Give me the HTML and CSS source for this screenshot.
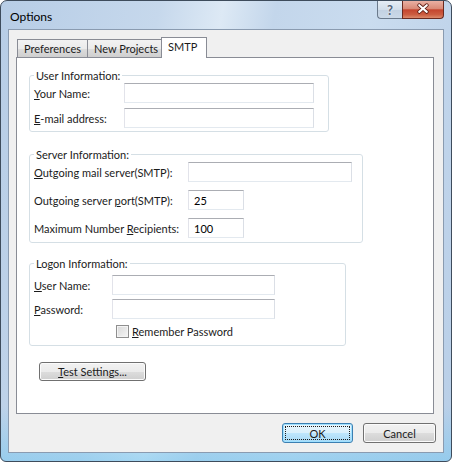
FILE: index.html
```html
<!DOCTYPE html>
<html lang="en">
<head>
    <meta charset="UTF-8">
    <title>Options</title>
    <link rel="stylesheet" href="styles.css">
</head>
<body>
    <div class="window">
        <div class="titlebar">
            <span class="title">Options</span>
            <div class="caption-buttons">
                <span class="cap-btn help">?</span>
                <span class="cap-btn close">
                    <svg width="42" height="18" viewBox="0 0 42 18">
                        <path d="M17 5 L25 12 M25 5 L17 12" stroke="#5a1a12" stroke-width="4" stroke-linecap="round"/>
                        <path d="M17 5 L25 12 M25 5 L17 12" stroke="#ffffff" stroke-width="2.2" stroke-linecap="round"/>
                    </svg>
                </span>
            </div>
        </div>

        <div class="client">
            <div class="tabs">
                <span class="tab tab-pref">Preferences</span>
                <span class="tab tab-proj">New Projects</span>
                <span class="tab tab-smtp active">SMTP</span>
            </div>

            <div class="panel">
                <fieldset class="group group-user">
                    <legend>User Information:</legend>
                    <div class="row">
                        <label class="lbl"><u>Y</u>our Name:</label>
                        <input type="text" class="text-box w-name">
                    </div>
                    <div class="row">
                        <label class="lbl"><u>E</u>-mail address:</label>
                        <input type="text" class="text-box w-name">
                    </div>
                </fieldset>

                <fieldset class="group group-server">
                    <legend>Server Information:</legend>
                    <div class="row">
                        <label class="lbl"><u>O</u>utgoing mail server(SMTP):</label>
                        <input type="text" class="text-box w-server">
                    </div>
                    <div class="row">
                        <label class="lbl">Outgoing server <u>p</u>ort(SMTP):</label>
                        <input type="text" class="text-box w-small" value="25">
                    </div>
                    <div class="row">
                        <label class="lbl">Maximum Number <u>R</u>ecipients:</label>
                        <input type="text" class="text-box w-small" value="100">
                    </div>
                </fieldset>

                <fieldset class="group group-logon">
                    <legend>Logon Information:</legend>
                    <div class="row">
                        <label class="lbl"><u>U</u>ser Name:</label>
                        <input type="text" class="text-box w-logon">
                    </div>
                    <div class="row">
                        <label class="lbl"><u>P</u>assword:</label>
                        <input type="password" class="text-box w-logon">
                    </div>
                    <div class="check-row">
                        <span class="checkbox"></span>
                        <span><u>R</u>emember Password</span>
                    </div>
                </fieldset>

                <button class="btn btn-test"><u>T</u>est Settings...</button>
            </div>

            <div class="dialog-buttons">
                <button class="btn btn-ok"><span class="focus-rect">OK</span></button>
                <button class="btn btn-cancel">Cancel</button>
            </div>
        </div>
    </div>
</body>
</html>
```

FILE: styles.css
```css
body {
    margin: 0;
    font-family: Lato, "Liberation Sans", sans-serif;
    font-size: 11px;
    color: #1b1b1b;
    white-space: nowrap;
}
.window {
    width: 452px;
    height: 462px;
    box-sizing: border-box;
    border: 1px solid #3e4c5c;
    border-radius: 7px 7px 6px 6px;
    background:
        linear-gradient(to bottom, rgba(255, 255, 255, 0) 88%, rgba(120, 200, 240, 0.55) 100%),
        linear-gradient(100deg, #b7cde6 0%, #c6d8ec 30%, #dde9f5 42%, #c3d6eb 52%, #cadcef 70%, #b8cee7 100%);
    display: flex;
    flex-direction: column;
    overflow: hidden;
}
.titlebar {
    height: 28px;
    display: flex;
    align-items: flex-start;
}
.title {
    margin: 8px 0 0 9px;
    font-size: 12px;
    color: #000000;
}
.caption-buttons {
    margin-left: auto;
    margin-right: 7px;
    display: flex;
}
.cap-btn {
    height: 18px;
    box-sizing: border-box;
    display: flex;
    align-items: center;
    justify-content: center;
}
.help {
    width: 25px;
    border: 1px solid #6b7a8c;
    border-top: none;
    border-right: none;
    border-radius: 0 0 0 4px;
    background: linear-gradient(#e6edf5, #d2deea 50%, #c2d1e2 51%, #cbd9e8);
    color: #56657a;
    font-weight: bold;
    font-size: 13px;
    text-shadow: 0 0 2px #ffffff;
}
.close {
    width: 42px;
    border: 1px solid #6a2a20;
    border-top: none;
    border-radius: 0 0 4px 0;
    background: linear-gradient(#eab0a3, #d98a77 45%, #c4452f 52%, #cc5d41 80%, #dc8a6c);
}
.close svg {
    display: block;
    margin-top: -1px;
}
.client {
    margin: 0 7px;
    height: 424px;
    box-sizing: border-box;
    border: 1px solid #8a9bb0;
    background-color: #f0f0f0;
    display: flex;
    flex-direction: column;
}
.tabs {
    display: flex;
    align-items: flex-end;
    height: 21px;
    margin: 7px 0 -1px 8px;
}
.tab {
    height: 18px;
    box-sizing: border-box;
    margin-bottom: 1px;
    border: 1px solid #898c95;
    border-bottom: none;
    background: linear-gradient(#f2f2f2, #ebebeb 50%, #dddddd 51%, #cfcfcf);
    padding: 2px 0 0 6px;
    color: #1b1b1b;
}
.tab + .tab {
    margin-left: -1px;
}
.tab-pref {
    width: 71px;
}
.tab-proj {
    width: 75px;
}
.tab-smtp {
    width: 46px;
}
.tab.active {
    height: 21px;
    margin-bottom: 0;
    background: #ffffff;
    padding: 2px 0 0 6px;
    position: relative;
    z-index: 1;
}
.panel {
    height: 357px;
    margin: 0 9px 0 7px;
    box-sizing: border-box;
    border: 1px solid #898c95;
    background-color: #ffffff;
    padding: 10px 0 0 12px;
}
.group {
    margin: 0;
    min-width: 0;
    box-sizing: border-box;
    border: 1px solid #d5dfe5;
    border-radius: 3px;
    padding: 0 0 3px 4px;
}
.group legend {
    padding: 0 2px;
    line-height: 15px;
    color: #1b1b1b;
}
.group-user {
    width: 300px;
}
.group-server {
    width: 334px;
    margin-top: 15px;
    padding-bottom: 4px;
}
.group-logon {
    width: 317px;
    margin-top: 13px;
    padding-bottom: 7px;
}
.row {
    display: flex;
    align-items: center;
    height: 20px;
}
.group-user .row + .row {
    margin-top: 5px;
}
.group-server .row + .row {
    margin-top: 8px;
}
.group-logon .row:first-of-type {
    margin-top: 4px;
}
.group-logon .row + .row {
    margin-top: 4px;
}
.lbl {
    flex-shrink: 0;
}
.group-user .lbl {
    width: 90px;
}
.group-server .lbl {
    width: 154px;
}
.group-logon .lbl {
    width: 78px;
}
.text-box {
    height: 20px;
    box-sizing: border-box;
    border: 1px solid;
    border-color: #abadb3 #dbdfe6 #e3e9ef #e2e3ea;
    padding: 0 5px;
    font-family: inherit;
    font-size: 11px;
    color: #000000;
    outline: none;
}
.w-name {
    width: 190px;
}
.w-server {
    width: 164px;
}
.w-small {
    width: 56px;
}
.w-logon {
    width: 163px;
}
.check-row {
    display: flex;
    align-items: center;
    height: 13px;
    margin: 6px 0 0 82px;
}
.checkbox {
    width: 13px;
    height: 13px;
    box-sizing: border-box;
    border: 1px solid #8f8f8f;
    background: linear-gradient(135deg, #d8d8d8, #f6f6f6);
    box-shadow: inset 0 0 0 1px #f4f4f4;
    margin-right: 3px;
}
.btn {
    height: 20px;
    box-sizing: border-box;
    border: 1px solid #707070;
    border-radius: 3px;
    background: linear-gradient(#f2f2f2, #ebebeb 50%, #dddddd 51%, #cfcfcf);
    box-shadow: inset 0 0 0 1px #fbfbfb;
    font-family: inherit;
    font-size: 11px;
    color: #1b1b1b;
    padding: 0;
}
.btn-test {
    width: 107px;
    height: 19px;
    margin: 16px 0 0 10px;
    display: block;
}
.dialog-buttons {
    display: flex;
    justify-content: flex-end;
    gap: 10px;
    margin: 9px 7px 0 0;
}
.btn-ok {
    width: 71px;
    border-color: #3c7fb1;
    background: linear-gradient(#eaf6fd, #d9f0fc 50%, #bee6fd 51%, #a7d9f5);
    box-shadow: inset 0 0 0 1px #9fe0ff;
    padding: 2px;
}
.focus-rect {
    display: flex;
    align-items: center;
    justify-content: center;
    height: 100%;
    box-sizing: border-box;
    border: 1px dotted #1b1b1b;
}
.btn-cancel {
    width: 73px;
}
```
